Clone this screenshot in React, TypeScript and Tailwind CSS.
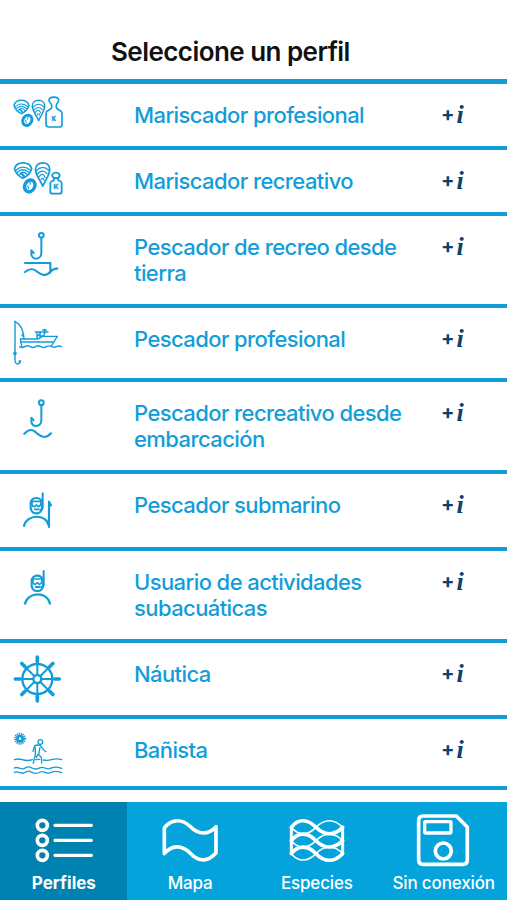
import React from "react";

interface Profile {
  label: string;
  height: string;
  icon: React.ReactNode;
}

function ShellfishPair() {
  return (
    <>
      {/* Clam */}
      <path d="M42 106 C45 96 54 91 64 91 C75 91 84 96 87 106 C84 119 75 126 64 131 C54 126 45 119 42 106Z" strokeWidth="4.5" />
      <path d="M46 110 Q64 94 84 110 M49 116 Q64 102 80 116 M55 121 Q65 110 75 121" strokeWidth="3.6" />
      <path d="M60 118 L67 126" />
      {/* Mussel */}
      <path d="M116 152 C109 134 97 123 97 108 C97 98 105 91 116 91 C127 91 134 98 134 108 C134 123 123 135 116 152Z" strokeWidth="4.5" />
      <path d="M99 112 Q115 94 132 111 M102 120 Q115 105 127 119 M106 127 Q116 114 122 129 M112 134 Q117 128 119 136" strokeWidth="3.2" />
      {/* Cockle */}
      <ellipse cx="82" cy="151" rx="13" ry="16" transform="rotate(28 82 151)" strokeWidth="9" />
      <path d="M77 151 L79 158 M83 141 L83 147" strokeWidth="3" />
    </>
  );
}

function Hook() {
  return (
    <>
      <circle cx="124" cy="76" r="7" strokeWidth="6" />
      <path d="M124 84 V129 C124 151 94 151 94 132 V121 L101 129" strokeWidth="6" />
    </>
  );
}

function DiverBody() {
  return (
    <>
      <path d="M128 70 V112 Q128 118 122 119" strokeWidth="6" />
      <rect x="92" y="84" width="34" height="46" rx="16" strokeWidth="6.5" />
      <path d="M94 94 H124 M96 95 V103 Q97 110 103 110 L109 105 L115 110 Q122 109 123 97" strokeWidth="5" />
      <path d="M104 118 H117" strokeWidth="5.5" />
      <path d="M72 168 C80 132 139 130 147 168" strokeWidth="6.5" />
    </>
  );
}

const ICON = "w-[52px] fill-none stroke-[#129dd9] text-[#129dd9]";

const PROFILES: Profile[] = [
  {
    label: "Mariscador profesional",
    height: "h-[66px]",
    icon: (
      <svg viewBox="36 72 156 108" className={`${ICON} mt-[10px] h-[36px]`} strokeWidth="5" strokeLinecap="round" strokeLinejoin="round">
        <ShellfishPair />
        <path d="M155 106 C155 100 147 98 147 91 C147 78 176 78 176 91 C176 98 169 100 169 106 V113 C172 121 186 119 186 130 V165 Q186 171 178 171 H146 Q138 171 138 163 V130 C138 120 152 121 155 113Z" />
        <text x="155" y="152" fontSize="17" fontWeight="800" fontFamily="Inter, sans-serif" fill="currentColor" strokeWidth="1">K</text>
      </svg>
    ),
  },
  {
    label: "Mariscador recreativo",
    height: "h-[66px]",
    icon: (
      <svg viewBox="36 45 156 108" className={`${ICON} mt-[10px] h-[36px]`} strokeWidth="5.5" strokeLinecap="round" strokeLinejoin="round">
        <g transform="translate(-5 -51) scale(1.15)">
          <ShellfishPair />
        </g>
        <path d="M162 99 C150 91 160 83 168 83 C176 83 185 91 174 99 V105 C179 109 185 108 185 114 V140 Q185 146 178 146 H158 Q151 146 151 140 V114 C151 108 158 109 162 105Z M161 99 H175" />
        <text x="160.5" y="132" fontSize="20" fontWeight="800" fontFamily="Inter, sans-serif" fill="currentColor" strokeWidth="1">K</text>
      </svg>
    ),
  },
  {
    label: "Pescador de recreo desde tierra",
    height: "h-[92px]",
    icon: (
      <svg viewBox="36 60 156 144" className={`${ICON} mt-[14px] h-[48px]`} strokeWidth="6.5" strokeLinecap="round" strokeLinejoin="round">
        <Hook />
        <path d="M75 159 H151 V188 M75 186 C90 174 100 174 113 186 C128 199 140 198 150 186 Q160 175 172 176" />
      </svg>
    ),
  },
  {
    label: "Pescador profesional",
    height: "h-[74px]",
    icon: (
      <svg viewBox="36 57 156 144" className={`${ICON} mt-[11px] h-[48px]`} strokeWidth="4.2" strokeLinecap="round" strokeLinejoin="round">
        <path d="M45 64 V183 C46 196 61 194 61 182 L57 185" />
        <path d="M45 64 C62 74 69 87 72 116 M67 103 V108" />
        <circle cx="45" cy="160" r="3.5" fill="currentColor" />
        <path d="M61 117 H108 C120 118 121 109 130 109 H172 L154 138 M62 117 V126 L66 139 M66 126 H159" />
        <path d="M106 96 H144 M111 98 V115 M120 98 V110 M135 98 L130 108 M112 109 L121 100 M121 108 H133 M134 88 V96 M128 90 H139" />
        <path d="M59 140 Q67 145 75 139 Q83 135 91 140 Q99 145 107 139 Q115 135 123 140 Q131 145 140 139 Q147 136 155 140 Q163 144 171 139 Q178 137 184 140" />
      </svg>
    ),
  },
  {
    label: "Pescador recreativo desde embarcación",
    height: "h-[92px]",
    icon: (
      <svg viewBox="36 51 156 129" className={`${ICON} mt-[15px] h-[43px]`} strokeWidth="6.5" strokeLinecap="round" strokeLinejoin="round">
        <g transform="translate(0 -8)">
          <Hook />
        </g>
        <path d="M73 161 C88 146 98 147 112 161 C128 175 140 174 153 160" />
      </svg>
    ),
  },
  {
    label: "Pescador submarino",
    height: "h-[77px]",
    icon: (
      <svg viewBox="36 63 156 117" className={`${ICON} mt-[17px] h-[39px]`} strokeLinecap="round" strokeLinejoin="round">
        <DiverBody />
        <path d="M147 171 V95 L153 106 H148" strokeWidth="6.5" />
      </svg>
    ),
  },
  {
    label: "Usuario de actividades subacuáticas",
    height: "h-[92px]",
    icon: (
      <svg viewBox="33 61 156 117" className={`${ICON} mt-[17px] h-[39px]`} strokeLinecap="round" strokeLinejoin="round">
        <DiverBody />
      </svg>
    ),
  },
  {
    label: "Náutica",
    height: "h-[76px]",
    icon: (
      <svg viewBox="36 39 156 156" className={`${ICON} mt-[10px] h-[52px]`} strokeWidth="7" strokeLinecap="round">
        <circle cx="112" cy="117" r="45" />
        <circle cx="112" cy="117" r="12" />
        {[0, 45, 90, 135, 180, 225, 270, 315].map((angle) => (
          <g key={angle} transform={`rotate(${angle} 112 117)`}>
            <path d="M112 105 V56" strokeWidth="6" />
            <path d="M112 65 V51" strokeWidth="11" />
          </g>
        ))}
      </svg>
    ),
  },
  {
    label: "Bañista",
    height: "h-[71px]",
    icon: (
      <svg viewBox="36 270 156 138" className={`${ICON} mt-[11px] h-[46px]`} strokeWidth="4" strokeLinecap="round" strokeLinejoin="round">
        <circle cx="60" cy="296" r="8" strokeWidth="8" />
        <circle cx="60" cy="296" r="15" strokeWidth="6" strokeDasharray="3.7 2.2" strokeLinecap="butt" />
        <circle cx="121" cy="306" r="7" />
        <path d="M113 315 Q103 315 102 323 L99 334 M113 315 Q122 315 124 320 L130 329 L138 335 M106 323 V344 L100 370 M113 344 L109 352 M120 323 L116 344 L124 352 L125 369" />
        <path d="M43 359 Q56 355 67 359 Q81 364 98 359 M107 359 L119 358 M130 360 Q142 363 154 359 Q170 354 185 359" />
        <path d="M43 384 C53 378 61 390 72 386 C84 379 87 379 96 384 C106 390 112 388 121 383 C132 378 137 389 149 386 C160 379 169 379 185 385 M43 397 C53 391 61 403 72 399 C84 392 87 392 96 397 C106 403 112 401 121 396 C132 391 137 402 149 399 C160 392 169 392 185 398" />
      </svg>
    ),
  },
];

const TABS = [
  {
    label: "Perfiles",
    active: true,
    icon: (
      <>
        <circle cx="128" cy="88" r="15" strokeWidth="11" />
        <circle cx="128" cy="133" r="15" strokeWidth="11" />
        <circle cx="128" cy="178" r="15" strokeWidth="11" />
        <path d="M166 88 H275 M166 133 H275 M166 178 H275" strokeWidth="10" />
      </>
    ),
    viewBox: "97 48 190 168",
  },
  {
    label: "Mapa",
    active: false,
    icon: (
      <path
        d="M494 96 C514 68 546 68 571 91 C598 119 627 116 649 92 V171 C625 197 599 200 571 171 C544 145 516 148 494 173Z"
        strokeWidth="11"
      />
    ),
    viewBox: "475 48 190 168",
  },
  {
    label: "Especies",
    active: false,
    icon: (
      <>
        <path d="M116 93 V173 M270 93 V173" strokeWidth="9" />
        <path d="M116 94 C137 66 166 69 190 94 C216 120 245 119 270 94 M116 134 C137 107 166 109 190 134 C216 160 245 159 270 134 M116 173 C137 146 166 148 190 173 C216 200 245 199 270 173" strokeWidth="11" />
        <path d="M116 94 C137 120 166 119 190 94 C216 67 245 68 270 94 M116 134 C137 160 166 159 190 134 C216 107 245 108 270 134 M116 173 C137 199 166 198 190 173 C216 146 245 147 270 173" strokeWidth="5" />
      </>
    ),
    viewBox: "97 48 190 168",
  },
  {
    label: "Sin conexión",
    active: false,
    icon: (
      <>
        <path d="M511 60 H610 L643 93 V191 Q643 205 629 205 H511 Q497 205 497 191 V74 Q497 60 511 60Z" strokeWidth="11" />
        <rect x="515" y="77" width="79" height="34" rx="2" strokeWidth="10" />
        <circle cx="571" cy="165" r="24" strokeWidth="11" />
      </>
    ),
    viewBox: "477 48 190 168",
  },
];

export default function App() {
  return (
    <div className="flex h-[900px] w-[507px] flex-col overflow-hidden bg-white font-['Inter',sans-serif]">
      <header className="h-[84px] shrink-0 border-b-[5px] border-[#129dd6] pt-[34px] pl-[111px]">
        <h1 className="text-[26px] leading-9 font-semibold tracking-[-0.55px] whitespace-nowrap text-[#111]">
          Seleccione un perfil
        </h1>
      </header>

      <main className="flex-1">
        {PROFILES.map((profile) => (
          <div key={profile.label} className={`flex border-b-4 border-[#129dd6] ${profile.height}`}>
            <div className="w-[134px] shrink-0 pl-3">{profile.icon}</div>
            <p className="w-[290px] shrink-0 pt-[18px] text-[22px] leading-[26px] font-[450] tracking-[-0.59px] text-[#129dd9]">
              {profile.label}
            </p>
            <button type="button" className="flex h-[60px] items-start gap-[2px] pt-[17px] pl-[17px] text-[#0d426d]">
              <span className="-mt-px text-[20px] leading-7 font-bold">+</span>
              <span className="font-['Liberation_Serif',serif] text-[26px] leading-7 font-bold italic">i</span>
            </button>
          </div>
        ))}
      </main>

      <nav className="grid h-[98px] shrink-0 grid-cols-4 bg-[#05a3dc] text-white">
        {TABS.map((tab) => (
          <button
            key={tab.label}
            type="button"
            className={`flex flex-col items-center pt-[10px] ${tab.active ? "bg-[#0082b0]" : ""}`}
          >
            <svg
              viewBox={tab.viewBox}
              className="h-[56px] w-[63.3px] fill-none stroke-current"
              strokeLinecap="round"
              strokeLinejoin="round"
            >
              {tab.icon}
            </svg>
            <span
              className={`mt-[3px] text-[17px] leading-6 whitespace-nowrap ${tab.active ? "pl-px font-bold" : "font-medium tracking-[-0.15px]"}`}
            >
              {tab.label}
            </span>
          </button>
        ))}
      </nav>
    </div>
  );
}
